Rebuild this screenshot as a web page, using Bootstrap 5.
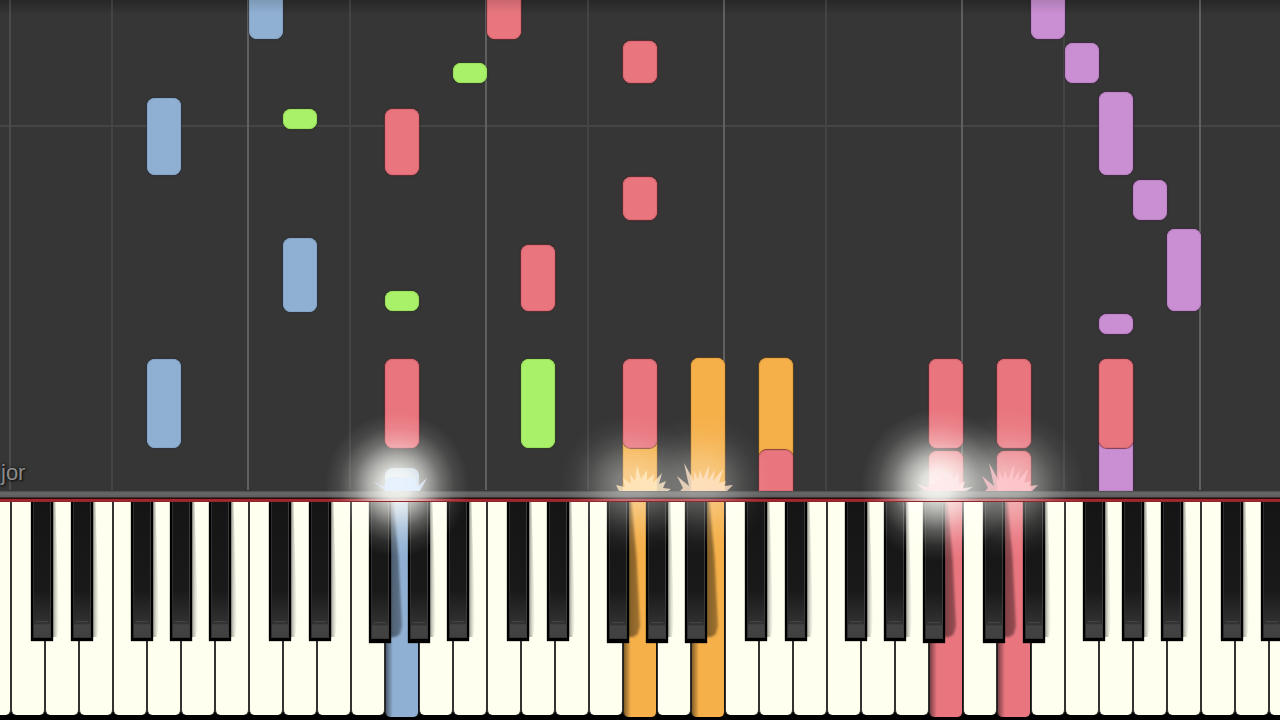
<!DOCTYPE html>
<html lang="en">
<head>
<meta charset="utf-8">
<meta name="viewport" content="width=device-width, initial-scale=1">
<title>Piano roll</title>
<link href="https://cdn.jsdelivr.net/npm/bootstrap@5.3.0/dist/css/bootstrap.min.css" rel="stylesheet">
<style>
  body { background: #000; font-family: "Liberation Sans", Arial, sans-serif; }
  :root { --unit: calc(100vw * 34 / 1280); --lead-in: calc(100vw * 23 / 1280); }

  .roll { background: linear-gradient(#2d2d2d 0, #313131 8px, #363636 16px); }
  .roll-line { position: absolute; top: 0; bottom: 1px; width: 2px; background: #444; }
  .roll-line.octave { background: #606060; }
  .roll-line.faint { background: #4b4b4b; }
  .roll-bar { position: absolute; left: 0; right: 0; bottom: 364px; height: 2px; background: #454545; }
  .roll-fade { position: absolute; inset: 0 0 auto; height: 14px; background: linear-gradient(#0002, #0000); }
  .note { position: absolute; width: var(--unit); border-radius: 8px; background: var(--tone); box-shadow: inset 0 0 0 1px var(--rim), 0 0 0 1px var(--edge), 0 0 3px #0003; }
  .note.held { border-bottom-left-radius: 0; border-bottom-right-radius: 0; }
  .blue { --tone: #90b0d3; --edge: #2c364288; --rim: #86a4c5; }
  .red { --tone: #e9767f; --edge: #6e2c33bb; --rim: #d96c75; }
  .green { --tone: #a8f168; --edge: #33471f88; --rim: #9de060; }
  .orange { --tone: #f5b04a; --edge: #6b4a1caa; --rim: #e5a343; }
  .purple { --tone: #ca8fd2; --edge: #462c4daa; --rim: #bd84c5; }
  .song-key { position: absolute; left: 1px; bottom: 6px; font-size: 22px; line-height: 24px; color: #8c8c8c; text-shadow: 0 0 3px #111, 1px 1px 2px #111; }

  .rail { height: 10px; background: linear-gradient(#4c4c4c 0, #686868 2px, #5c5c5c 6px, #1d0a0b 7px, #3a1012 8px, #a3242c 8px, #a8262e 10px); }

  .keyboard { height: 219px; padding-bottom: 4px; background: #000; }
  .keyboard::before { content: ""; position: absolute; inset: 0 0 auto; height: 1px; background: #8a2a2e; z-index: 1; }
  .keys { margin-left: calc(-1 * var(--lead-in)); height: 214px; }
  .white-key { flex: 0 0 var(--unit); height: 100%; border: 0; padding: 0; position: relative; border-radius: 0 0 5px 5px;
    background: #fffff0; border-left: 1px solid #333; border-right: 1px solid #33332f; }
  .white-key.down { height: calc(100% + 2px); background: linear-gradient(90deg, #0007 0, #0003 4px, #0000 7px), var(--tone); border-right-color: #111; border-left-color: #222; }
  .black-key { position: absolute; top: 0; width: calc(100vw * 22 / 1280); height: 140px; padding: 0; border: solid #000; border-width: 0 2px 3px;
    background: linear-gradient(#151515 0, #191919 65%, #303030 88%, #343434 100%); border-radius: 0;
    box-shadow: inset 1px 0 #2d2d2d, inset -1px 0 #3c3c3c, 0 0 1px #000; }
  .black-key::after { content: ""; position: absolute; left: 1px; right: 1px; bottom: 1px; height: 16px; border-radius: 4px 4px 0 0;
    background: linear-gradient(#4c4c4c 0, #2c2c2c 2px, #434343 4px, #404040 100%); }
  .black-key.beside { height: 142px; border-bottom-width: 4px; }
  .key-shade { position: absolute; top: 0; height: 136px; width: 7px; pointer-events: none; background: linear-gradient(90deg, #0007, #0002 60%, #0000); clip-path: polygon(0 0, 50% 0, 100% 90%, 70% 100%, 0 100%); }
  .key-shade.long { width: 13px; filter: blur(1px); background: none; clip-path: none; }
  .key-shade.long::before { content: ""; position: absolute; inset: 0; background: linear-gradient(90deg, #0007, #0005); clip-path: polygon(0 0, 25% 0, 65% 40%, 92% 92%, 75% 98%, 40% 100%, 0 100%); }

  .flare { position: absolute; bottom: 229px; width: 60px; height: 0; pointer-events: none; transform: translateX(-50%); }
  .glow { position: absolute; border-radius: 50%; background: radial-gradient(closest-side, #fffffaf0 0, #fffffad8 20%, #fffffa98 40%, #fffffa4c 60%, #fffffa18 80%, #fff0 100%); }
  .flare svg { position: absolute; left: 0; bottom: 0; width: 60px; height: 30px; }
</style>
</head>
<body>
<main class="d-flex flex-column vh-100 position-relative overflow-hidden">
  <section class="roll flex-grow-1 position-relative overflow-hidden" id="roll" aria-label="Falling notes">
    <div class="roll-bar"></div>
  </section>
  <div class="rail flex-shrink-0"></div>
  <section class="keyboard flex-shrink-0 position-relative overflow-hidden" aria-label="Keyboard">
    <div class="keys d-flex" id="keys"></div>
    <div id="sharps"></div>
  </section>
  <div id="flares"></div>
</main>
<script src="https://cdn.jsdelivr.net/npm/bootstrap@5.3.0/dist/js/bootstrap.bundle.min.js"></script>
<script>
  const pct = x => (x / 12.8) + '%';
  const keyLeft = k => 11 + 34 * k;
  const roll = document.getElementById('roll');
  const add = (parent, cls, style, tag = 'div') => {
    const el = document.createElement(tag);
    el.className = cls;
    Object.assign(el.style, style);
    parent.append(el);
    return el;
  };

  // one line at each C and each F
  for (let o = 0; o < 6; o++) {
    add(roll, 'roll-line ' + (o ? 'octave' : 'faint'), { left: pct(9 + 238 * o) });
    add(roll, 'roll-line', { left: pct(111 + 238 * o) });
  }

  // [white key, distance from the rail, length, colour, still sounding]
  const notes = [
    [4, 316, 77, 'blue'], [7, 452, 60, 'blue'], [8, 179, 74, 'blue'], [4, 43, 89, 'blue'], [11, 0, 23, 'blue', 1],
    [8, 362, 20, 'green'], [13, 408, 20, 'green'], [11, 180, 20, 'green'], [15, 43, 89, 'green'],
    [18, 0, 60, 'orange', 1], [20, 0, 133, 'orange', 1], [22, 30, 103, 'orange'],
    [32, 0, 60, 'purple', 1], [30, 452, 60, 'purple'], [31, 408, 40, 'purple'], [32, 316, 83, 'purple'],
    [33, 271, 40, 'purple'], [34, 180, 82, 'purple'], [32, 157, 20, 'purple'],
    [14, 452, 60, 'red'], [18, 408, 42, 'red'], [11, 316, 66, 'red'], [18, 271, 43, 'red'], [15, 180, 66, 'red'],
    [11, 43, 89, 'red'], [18, 43, 89, 'red'], [22, 0, 41, 'red', 1], [27, 43, 89, 'red'], [27, 0, 40, 'red', 1],
    [29, 43, 89, 'red'], [29, 0, 40, 'red', 1], [32, 43, 89, 'red']
  ];
  for (const [k, from, len, tone, held] of notes)
    add(roll, `note ${tone}${held ? ' held' : ''}`, { left: pct(keyLeft(k)), bottom: from + 'px', height: len + 'px' });
  add(roll, 'roll-fade', {});
  add(roll, 'song-key', {}, 'span').textContent = 'jor';

  const pressed = { 11: 'blue', 18: 'orange', 20: 'orange', 27: 'red', 29: 'red' };
  const names = 'CDEFGAB';
  const keys = document.getElementById('keys');
  for (let k = -1; k < 38; k++) {
    const key = add(keys, 'white-key' + (pressed[k] ? ' down ' + pressed[k] : ''), {}, 'button');
    key.type = 'button';
    key.ariaLabel = names[(k + 7) % 7];
  }
  const sharps = document.getElementById('sharps');
  const sharpAt = { 0: 20, 1: 60, 3: 120, 4: 159, 5: 198 };
  for (let k = 0; k < 38; k++) {
    const at = sharpAt[k % 7];
    if (at === undefined) continue;
    const x = 11 + 238 * Math.floor(k / 7) + at;
    add(sharps, 'key-shade' + (pressed[k + 1] ? ' long' : ''), { left: pct(x + 21) });
    const b = add(sharps, 'black-key' + (pressed[k] || pressed[k + 1] ? ' beside' : ''), { left: pct(x) }, 'button');
    b.type = 'button';
    b.ariaLabel = names[k % 7] + ' sharp';
  }

  // [centre, glow offset, glow radius, glow strength, spark colour, spark shape]
  const burst = 'M5 30 L8 27 L2 15 L14 25 L9 2 L19 20 L19 10 L23 18 L25 9 L28 18 L34 4 L33 19 L40 9 L38 20 L48 8 L44 22 L51 20 L49 25 L58 24 L52 30Z';
  const fan = 'M5 30 L2 24 L11 26 L9 17 L17 23 L16 13 L21 20 L23 4 L27 18 L33 9 L33 19 L40 13 L39 22 L48 12 L45 23 L52 20 L49 27 L57 28 L54 30Z';
  const wings = 'M14 30 L1 20 L12 26 L14 18 L20 16 L38 16 L44 19 L45 26 L55 17 L48 30Z';
  const low = 'M9 30 L1 23 L15 27 L13 22 L19 24 L18 14 L23 21 L26 10 L30 20 L35 11 L37 21 L42 12 L43 24 L49 20 L47 27 L57 26 L50 30Z';
  const flares = [
    [402, -5, 72, 1, '#e3f0ff', wings], [644, -14, 70, .42, '#ffe9c2', fan], [705, -4, 70, .36, '#ffe4c8', burst],
    [946, -9, 76, 1, '#ffe9ea', low], [1010, 0, 74, .5, '#ffc9ce', burst]
  ];
  for (const [x, dx, r, a, fill, d] of flares) {
    const f = add(document.getElementById('flares'), 'flare', { left: pct(x) });
    add(f, 'glow', { left: 30 + dx - r + 'px', top: -r - 6 + 'px', width: 2 * r + 'px', height: 2 * r + 'px', opacity: a });
    f.insertAdjacentHTML('beforeend', `<svg viewBox="0 0 60 30" aria-hidden="true"><path d="${d}" fill="${fill}" opacity=".8"/></svg>`);
  }
</script>
</body>
</html>
